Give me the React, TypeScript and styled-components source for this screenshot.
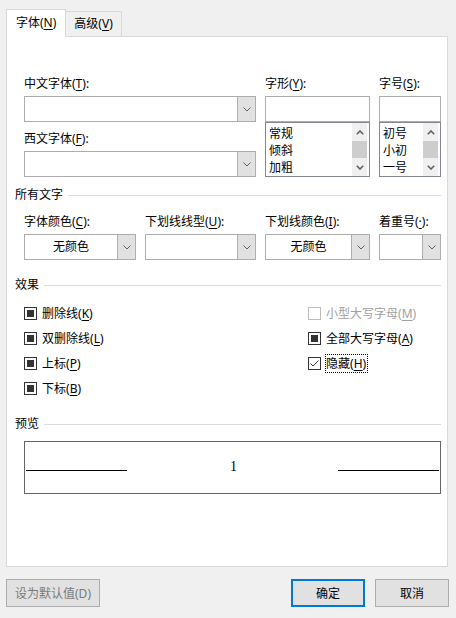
import styled, { createGlobalStyle } from 'styled-components';

const GlobalStyle = createGlobalStyle`
  html, body {
    margin: 0;
    padding: 0;
    background: #f0f0f0;
  }
  body {
    font-family: "Noto Sans", "Noto Sans CJK SC", "Microsoft YaHei", sans-serif;
    font-size: 12px;
    color: #000;
  }
  u {
    text-decoration-thickness: 1px;
    text-underline-offset: 2px;
  }
`;

const Window = styled.div`
  width: 456px;
  height: 618px;
  box-sizing: border-box;
  padding: 9px 8px 0 6px;
`;

const TabBar = styled.div`
  display: flex;
  align-items: flex-start;
  height: 28px;
  margin-bottom: -1px;
  position: relative;
  z-index: 1;
`;

const Tab = styled.div<{ $active?: boolean }>`
  box-sizing: border-box;
  height: ${(p) => (p.$active ? '28px' : '25px')};
  margin-top: ${(p) => (p.$active ? '0' : '2px')};
  padding: 0 ${(p) => (p.$active ? '9px' : '8px')};
  line-height: ${(p) => (p.$active ? '26px' : '23px')};
  border: 1px solid #d9d9d9;
  border-bottom: none;
  border-left: ${(p) => (p.$active ? '1px solid #d9d9d9' : 'none')};
  background: ${(p) => (p.$active ? '#fff' : '#f0f0f0')};
  white-space: nowrap;
`;

const Panel = styled.div`
  height: 531px;
  box-sizing: border-box;
  border: 1px solid #d9d9d9;
  background: #fff;
  padding: 39px 6px 0 8px;
`;

const Indented = styled.div`
  margin-left: 9px;
`;

const FontGrid = styled(Indented)`
  display: grid;
  grid-template-columns: 232px 105px 62px;
  column-gap: 9px;
`;

const Column = styled.div`
  display: flex;
  flex-direction: column;
`;

const Field = styled.div<{ $gap?: number }>`
  display: flex;
  flex-direction: column;
  margin-top: ${(p) => p.$gap ?? 0}px;
`;

const Label = styled.div`
  height: 16px;
  line-height: 16px;
  margin-bottom: 4px;
  white-space: nowrap;
`;

const Combo = styled.div`
  height: 26px;
  box-sizing: border-box;
  border: 1px solid #adadad;
  background: #fff;
  display: flex;
`;

const ComboText = styled.div`
  flex: 1;
  text-align: center;
  line-height: 24px;
`;

const DropButton = styled.div`
  width: 17px;
  background: #e1e1e1;
  border-left: 1px solid #adadad;
  display: flex;
  align-items: center;
  justify-content: center;
`;

const TextBox = styled.div`
  height: 26px;
  box-sizing: border-box;
  border: 1px solid #adadad;
  background: #fff;
`;

const ListBox = styled.div`
  height: 55px;
  box-sizing: border-box;
  border: 1px solid #828790;
  background: #fff;
  display: flex;
`;

const Items = styled.div`
  flex: 1;
  padding: 2px 0 0 3px;
`;

const Item = styled.div`
  height: 17px;
  line-height: 17px;
`;

const ScrollBar = styled.div`
  width: 15px;
  margin-right: 2px;
  background: #f0f0f0;
  display: flex;
  flex-direction: column;
`;

const ScrollArrow = styled.div<{ $h: number }>`
  height: ${(p) => p.$h}px;
  display: flex;
  align-items: center;
  justify-content: center;
`;

const Thumb = styled.div`
  height: 17px;
  background: #cdcdcd;
`;

const SectionHeader = styled.div<{ $gap: number }>`
  display: flex;
  align-items: center;
  gap: 5px;
  height: 16px;
  line-height: 16px;
  margin-top: ${(p) => p.$gap}px;
`;

const Rule = styled.div`
  flex: 1;
  height: 1px;
  background: #dcdcdc;
`;

const ComboRow = styled(Indented)`
  display: grid;
  grid-template-columns: 112px 111px 105px 62px;
  column-gap: 9px;
  margin-top: 11px;
`;

const Effects = styled(Indented)`
  display: grid;
  grid-template-columns: 284px 1fr;
  margin-top: 8px;
`;

const CheckRow = styled.div<{ $disabled?: boolean }>`
  height: 25px;
  display: flex;
  align-items: center;
  gap: 3px;
  color: ${(p) => (p.$disabled ? '#a0a0a0' : '#000')};
  white-space: nowrap;
`;

const Box = styled.div<{ $disabled?: boolean }>`
  width: 13px;
  height: 13px;
  box-sizing: border-box;
  border: 1px solid ${(p) => (p.$disabled ? '#bcbcbc' : '#333')};
  background: #fff;
  display: flex;
  align-items: center;
  justify-content: center;
  margin-right: 1px;
`;

const Mixed = styled.div`
  width: 7px;
  height: 7px;
  background: #333;
`;

const CheckLabel = styled.span<{ $focus?: boolean }>`
  line-height: 17px;
  border: 1px ${(p) => (p.$focus ? 'dotted #000' : 'solid transparent')};
  padding-right: 1px;
`;

const Preview = styled(Indented)`
  width: 417px;
  height: 53px;
  box-sizing: border-box;
  margin-top: 9px;
  border: 1px solid #646464;
  display: flex;
  justify-content: space-between;
  align-items: baseline;
  padding: 17px 1px 0 1px;
`;

const PreviewLine = styled.div`
  width: 101px;
  height: 1px;
  background: #000;
`;

const PreviewText = styled.span`
  font-family: "Liberation Serif", serif;
  font-size: 14px;
  line-height: 15px;
  margin-left: 2px;
`;

const Footer = styled.div`
  display: flex;
  margin-top: 12px;
  margin-right: -1px;
`;

const Button = styled.button<{ $primary?: boolean; $w: number }>`
  width: ${(p) => p.$w}px;
  height: 28px;
  box-sizing: border-box;
  background: #e1e1e1;
  border: ${(p) => (p.$primary ? '2px solid #0078d7' : '1px solid #adadad')};
  font: inherit;
  color: ${(p) => (p.disabled ? '#7a7a7a' : '#000')};
  padding: 0;
  margin: 0;
`;

const Spacer = styled.div`
  flex: 1;
`;

const ButtonGap = styled.div`
  width: 10px;
`;

const Chevron = () => (
  <svg width="8" height="5" viewBox="0 0 8 5">
    <polyline points="0.5,0.5 4,4 7.5,0.5" fill="none" stroke="#606060" strokeWidth="1" />
  </svg>
);

const Arrow = ({ up }: { up?: boolean }) => (
  <svg width="8" height="5" viewBox="0 0 8 5">
    <polyline
      points={up ? '0.8,4.2 4,1 7.2,4.2' : '0.8,0.8 4,4 7.2,0.8'}
      fill="none"
      stroke="#606060"
      strokeWidth="1.6"
    />
  </svg>
);

const Check = () => (
  <svg width="11" height="11" viewBox="0 0 11 11">
    <polyline points="1.5,5.5 4,8 9.5,2.5" fill="none" stroke="#333" strokeWidth="1" />
  </svg>
);

const List = ({ items }: { items: string[] }) => (
  <ListBox>
    <Items>
      {items.map((t) => (
        <Item key={t}>{t}</Item>
      ))}
    </Items>
    <ScrollBar>
      <ScrollArrow $h={18}>
        <Arrow up />
      </ScrollArrow>
      <Thumb />
      <ScrollArrow $h={18}>
        <Arrow />
      </ScrollArrow>
    </ScrollBar>
  </ListBox>
);

const DropCombo = ({ value }: { value?: string }) => (
  <Combo>
    <ComboText>{value}</ComboText>
    <DropButton>
      <Chevron />
    </DropButton>
  </Combo>
);

type Effect = { label: string; key: string; state: 'mixed' | 'checked' | 'off'; disabled?: boolean; focus?: boolean };

const leftEffects: Effect[] = [
  { label: '删除线', key: 'K', state: 'mixed' },
  { label: '双删除线', key: 'L', state: 'mixed' },
  { label: '上标', key: 'P', state: 'mixed' },
  { label: '下标', key: 'B', state: 'mixed' },
];

const rightEffects: Effect[] = [
  { label: '小型大写字母', key: 'M', state: 'off', disabled: true },
  { label: '全部大写字母', key: 'A', state: 'mixed' },
  { label: '隐藏', key: 'H', state: 'checked', focus: true },
];

const EffectItem = ({ e }: { e: Effect }) => (
  <CheckRow $disabled={e.disabled}>
    <Box $disabled={e.disabled}>
      {e.state === 'mixed' && <Mixed />}
      {e.state === 'checked' && <Check />}
    </Box>
    <CheckLabel $focus={e.focus}>
      {e.label}(<u>{e.key}</u>)
    </CheckLabel>
  </CheckRow>
);

export default function App() {
  return (
    <>
      <GlobalStyle />
      <Window>
        <TabBar>
          <Tab $active>
            字体(<u>N</u>)
          </Tab>
          <Tab>
            高级(<u>V</u>)
          </Tab>
        </TabBar>
        <Panel>
          <FontGrid>
            <Column>
              <Field>
                <Label>
                  中文字体(<u>T</u>):
                </Label>
                <DropCombo />
              </Field>
              <Field $gap={9}>
                <Label>
                  西文字体(<u>F</u>):
                </Label>
                <DropCombo />
              </Field>
            </Column>
            <Field>
              <Label>
                字形(<u>Y</u>):
              </Label>
              <TextBox />
              <List items={['常规', '倾斜', '加粗']} />
            </Field>
            <Field>
              <Label>
                字号(<u>S</u>):
              </Label>
              <TextBox />
              <List items={['初号', '小初', '一号']} />
            </Field>
          </FontGrid>

          <SectionHeader $gap={10}>
            所有文字
            <Rule />
          </SectionHeader>
          <ComboRow>
            <Field>
              <Label>
                字体颜色(<u>C</u>):
              </Label>
              <DropCombo value="无颜色" />
            </Field>
            <Field>
              <Label>
                下划线线型(<u>U</u>):
              </Label>
              <DropCombo />
            </Field>
            <Field>
              <Label>
                下划线颜色(<u>I</u>):
              </Label>
              <DropCombo value="无颜色" />
            </Field>
            <Field>
              <Label>
                着重号(<u>·</u>):
              </Label>
              <DropCombo />
            </Field>
          </ComboRow>

          <SectionHeader $gap={17}>
            效果
            <Rule />
          </SectionHeader>
          <Effects>
            <Column>
              {leftEffects.map((e) => (
                <EffectItem key={e.key} e={e} />
              ))}
            </Column>
            <Column>
              {rightEffects.map((e) => (
                <EffectItem key={e.key} e={e} />
              ))}
            </Column>
          </Effects>

          <SectionHeader $gap={15}>
            预览
            <Rule />
          </SectionHeader>
          <Preview>
            <PreviewLine />
            <PreviewText>1</PreviewText>
            <PreviewLine />
          </Preview>
        </Panel>
        <Footer>
          <Button $w={94} disabled>
            设为默认值(D)
          </Button>
          <Spacer />
          <Button $w={74} $primary>
            确定
          </Button>
          <ButtonGap />
          <Button $w={74}>取消</Button>
        </Footer>
      </Window>
    </>
  );
}
